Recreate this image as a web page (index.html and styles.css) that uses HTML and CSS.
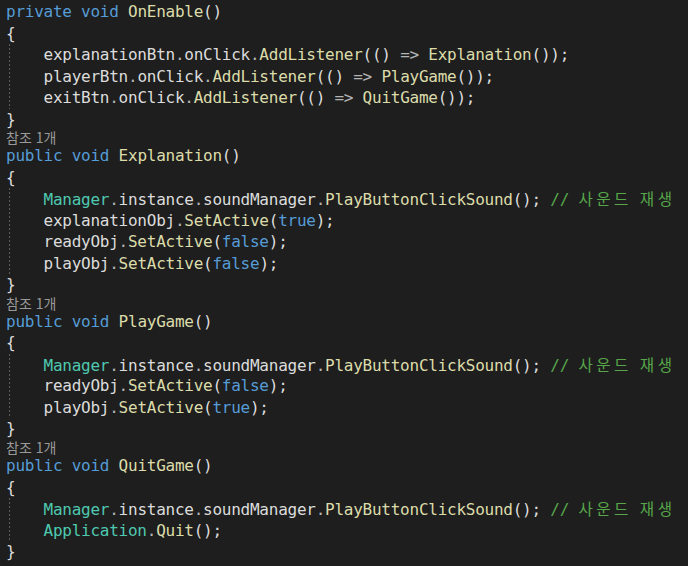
FILE: index.html
```html
<!DOCTYPE html>
<html lang="ko">
<head>
<meta charset="utf-8">
<title>Code</title>
<link rel="stylesheet" href="styles.css">
</head>
<body>
<div class="editor">
  <div class="line"><span class="kw">private</span> <span class="kw">void</span> <span class="fn">OnEnable</span><span class="p">()</span></div>
  <div class="line"><span class="p">{</span></div>
  <div class="body">
    <div class="line">    explanationBtn<span class="op">.</span>onClick<span class="op">.</span><span class="fn">AddListener</span><span class="p">(()</span> <span class="op">=&gt;</span> <span class="fn">Explanation</span><span class="p">());</span></div>
    <div class="line">    playerBtn<span class="op">.</span>onClick<span class="op">.</span><span class="fn">AddListener</span><span class="p">(()</span> <span class="op">=&gt;</span> <span class="fn">PlayGame</span><span class="p">());</span></div>
    <div class="line">    exitBtn<span class="op">.</span>onClick<span class="op">.</span><span class="fn">AddListener</span><span class="p">(()</span> <span class="op">=&gt;</span> <span class="fn">QuitGame</span><span class="p">());</span></div>
  </div>
  <div class="line"><span class="p">}</span></div>
  <div class="lens">참조 1개</div>
  <div class="line"><span class="kw">public</span> <span class="kw">void</span> <span class="fn">Explanation</span><span class="p">()</span></div>
  <div class="line"><span class="p">{</span></div>
  <div class="body">
    <div class="line">    <span class="ty">Manager</span><span class="op">.</span>instance<span class="op">.</span>soundManager<span class="op">.</span><span class="fn">PlayButtonClickSound</span><span class="p">();</span> <span class="cm">// <span class="ko">사운드 재생</span></span></div>
    <div class="line">    explanationObj<span class="op">.</span><span class="fn">SetActive</span><span class="p">(</span><span class="kw">true</span><span class="p">);</span></div>
    <div class="line">    readyObj<span class="op">.</span><span class="fn">SetActive</span><span class="p">(</span><span class="kw">false</span><span class="p">);</span></div>
    <div class="line">    playObj<span class="op">.</span><span class="fn">SetActive</span><span class="p">(</span><span class="kw">false</span><span class="p">);</span></div>
  </div>
  <div class="line"><span class="p">}</span></div>
  <div class="lens">참조 1개</div>
  <div class="line"><span class="kw">public</span> <span class="kw">void</span> <span class="fn">PlayGame</span><span class="p">()</span></div>
  <div class="line"><span class="p">{</span></div>
  <div class="body">
    <div class="line">    <span class="ty">Manager</span><span class="op">.</span>instance<span class="op">.</span>soundManager<span class="op">.</span><span class="fn">PlayButtonClickSound</span><span class="p">();</span> <span class="cm">// <span class="ko">사운드 재생</span></span></div>
    <div class="line">    readyObj<span class="op">.</span><span class="fn">SetActive</span><span class="p">(</span><span class="kw">false</span><span class="p">);</span></div>
    <div class="line">    playObj<span class="op">.</span><span class="fn">SetActive</span><span class="p">(</span><span class="kw">true</span><span class="p">);</span></div>
  </div>
  <div class="line"><span class="p">}</span></div>
  <div class="lens">참조 1개</div>
  <div class="line"><span class="kw">public</span> <span class="kw">void</span> <span class="fn">QuitGame</span><span class="p">()</span></div>
  <div class="line"><span class="p">{</span></div>
  <div class="body">
    <div class="line">    <span class="ty">Manager</span><span class="op">.</span>instance<span class="op">.</span>soundManager<span class="op">.</span><span class="fn">PlayButtonClickSound</span><span class="p">();</span> <span class="cm">// <span class="ko">사운드 재생</span></span></div>
    <div class="line">    <span class="ty">Application</span><span class="op">.</span><span class="fn">Quit</span><span class="p">();</span></div>
  </div>
  <div class="line"><span class="p">}</span></div>
</div>
</body>
</html>
```
FILE: styles.css
```css
html, body {
  margin: 0;
  padding: 0;
  background: #1e1e1e;
}

body {
  width: 688px;
  height: 566px;
  overflow: hidden;
}

.editor {
  padding: 1px 0 0 6px;
  font-family: "DejaVu Sans Mono", "Liberation Mono", "Noto Sans CJK KR", monospace;
  font-size: 16px;
  letter-spacing: -0.25px;
  color: #dcdcdc;
}

.line {
  height: 21.5px;
  line-height: 21.5px;
  white-space: pre;
}

.body {
  background-image: repeating-linear-gradient(to bottom, #5a5a5a 0 2px, transparent 2px 4px);
  background-repeat: no-repeat;
  background-position: 3px 0;
  background-size: 1px 100%;
}

.lens {
  height: 15.2px;
  line-height: 15.2px;
  font-family: "Noto Sans CJK KR", "Noto Sans", sans-serif;
  font-size: 14px;
  letter-spacing: 0;
  color: #999999;
  white-space: pre;
}

.kw { color: #569cd6; }
.fn { color: #dcdcaa; }
.ty { color: #4ec9b0; }
.op { color: #b4b4b4; }
.p { color: #dcdcdc; }
.cm { color: #57a64a; }

.ko {
  font-family: "Noto Sans CJK KR", sans-serif;
  font-size: 15.6px;
  letter-spacing: 3.5px;
}
```
